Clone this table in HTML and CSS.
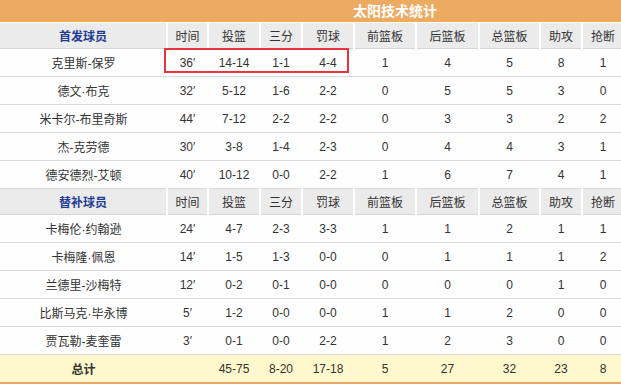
FILE: index.html
```html
<!DOCTYPE html>
<html>
<head>
<meta charset="utf-8">
<link rel="stylesheet" href="styles.css">
</head>
<body>
<div class="wrap">
  <div class="title"><span>太阳技术统计</span></div>
  <table class="stats">
    <colgroup>
      <col class="c-name"><col class="c41"><col class="c52"><col class="c42"><col class="c52"><col class="c62"><col class="c63"><col class="c61"><col class="c42"><col class="c42">
    </colgroup>
    <tr class="head"><th class="lead">首发球员</th><th>时间</th><th>投篮</th><th>三分</th><th>罚球</th><th>前篮板</th><th>后篮板</th><th>总篮板</th><th>助攻</th><th>抢断</th></tr>
    <tr><td>克里斯-保罗</td><td>36′</td><td>14-14</td><td>1-1</td><td>4-4</td><td>1</td><td>4</td><td>5</td><td>8</td><td>1</td></tr>
    <tr><td>德文·布克</td><td>32′</td><td>5-12</td><td>1-6</td><td>2-2</td><td>0</td><td>5</td><td>5</td><td>3</td><td>0</td></tr>
    <tr><td>米卡尔-布里奇斯</td><td>44′</td><td>7-12</td><td>2-2</td><td>2-2</td><td>0</td><td>3</td><td>3</td><td>2</td><td>2</td></tr>
    <tr><td>杰-克劳德</td><td>30′</td><td>3-8</td><td>1-4</td><td>2-3</td><td>0</td><td>4</td><td>4</td><td>3</td><td>1</td></tr>
    <tr><td>德安德烈-艾顿</td><td>40′</td><td>10-12</td><td>0-0</td><td>2-2</td><td>1</td><td>6</td><td>7</td><td>4</td><td>1</td></tr>
    <tr class="head"><th class="lead">替补球员</th><th>时间</th><th>投篮</th><th>三分</th><th>罚球</th><th>前篮板</th><th>后篮板</th><th>总篮板</th><th>助攻</th><th>抢断</th></tr>
    <tr><td>卡梅伦·约翰逊</td><td>24′</td><td>4-7</td><td>2-3</td><td>3-3</td><td>1</td><td>1</td><td>2</td><td>1</td><td>1</td></tr>
    <tr><td>卡梅隆·佩恩</td><td>14′</td><td>1-5</td><td>1-3</td><td>0-0</td><td>0</td><td>1</td><td>1</td><td>1</td><td>2</td></tr>
    <tr><td>兰德里-沙梅特</td><td>12′</td><td>0-2</td><td>0-1</td><td>0-0</td><td>0</td><td>0</td><td>0</td><td>1</td><td>0</td></tr>
    <tr><td>比斯马克·毕永博</td><td>5′</td><td>1-2</td><td>0-0</td><td>0-0</td><td>1</td><td>1</td><td>2</td><td>0</td><td>0</td></tr>
    <tr><td>贾瓦勒-麦奎雷</td><td>3′</td><td>0-1</td><td>0-0</td><td>2-2</td><td>1</td><td>2</td><td>3</td><td>0</td><td>0</td></tr>
    <tr class="total"><td class="bold">总计</td><td></td><td>45-75</td><td>8-20</td><td>17-18</td><td>5</td><td>27</td><td>32</td><td>23</td><td>8</td></tr>
  </table>
  <div class="mark"></div>
</div>
</body>
</html>
```
FILE: styles.css
```css
html, body {
  margin: 0;
  padding: 0;
  background: #ffffff;
  overflow: hidden;
}
body {
  font-family: "Liberation Sans", "Noto Sans CJK SC", sans-serif;
  font-size: 12px;
  color: #333333;
}
.wrap {
  position: relative;
  width: 623px;
}
.title {
  height: 22px;
  background: #ecab61;
  color: #ffffff;
  font-weight: bold;
  font-size: 14px;
  line-height: 22px;
  padding-left: 353px;
}
.stats {
  width: 623px;
  border-collapse: collapse;
  table-layout: fixed;
}
.c-name { width: 167px; }
.c41 { width: 41px; }
.c42 { width: 42px; }
.c52 { width: 52px; }
.c61 { width: 61px; }
.c62 { width: 62px; }
.c63 { width: 63px; }
.stats th, .stats td {
  padding: 0;
  text-align: center;
  white-space: nowrap;
  overflow: hidden;
}
.head th {
  height: 25px;
  background: #ebebeb;
  font-weight: normal;
  border-right: 2px solid #ffffff;
  border-bottom: 1px solid #d6d6d6;
  border-top: 1px solid #ffffff;
}
.head th.lead {
  color: #223c93;
  font-weight: bold;
}
.stats td {
  height: 27px;
  border-bottom: 1px solid #dadada;
  background: #fefefe;
}
.total td {
  background: #fef8cc;
  border-bottom: 3px solid #eaa862;
  height: 27px;
}
.total td.bold {
  font-weight: bold;
}
.mark {
  position: absolute;
  left: 164px;
  top: 48px;
  width: 181px;
  height: 21px;
  border: 2px solid #e8343c;
}
```
